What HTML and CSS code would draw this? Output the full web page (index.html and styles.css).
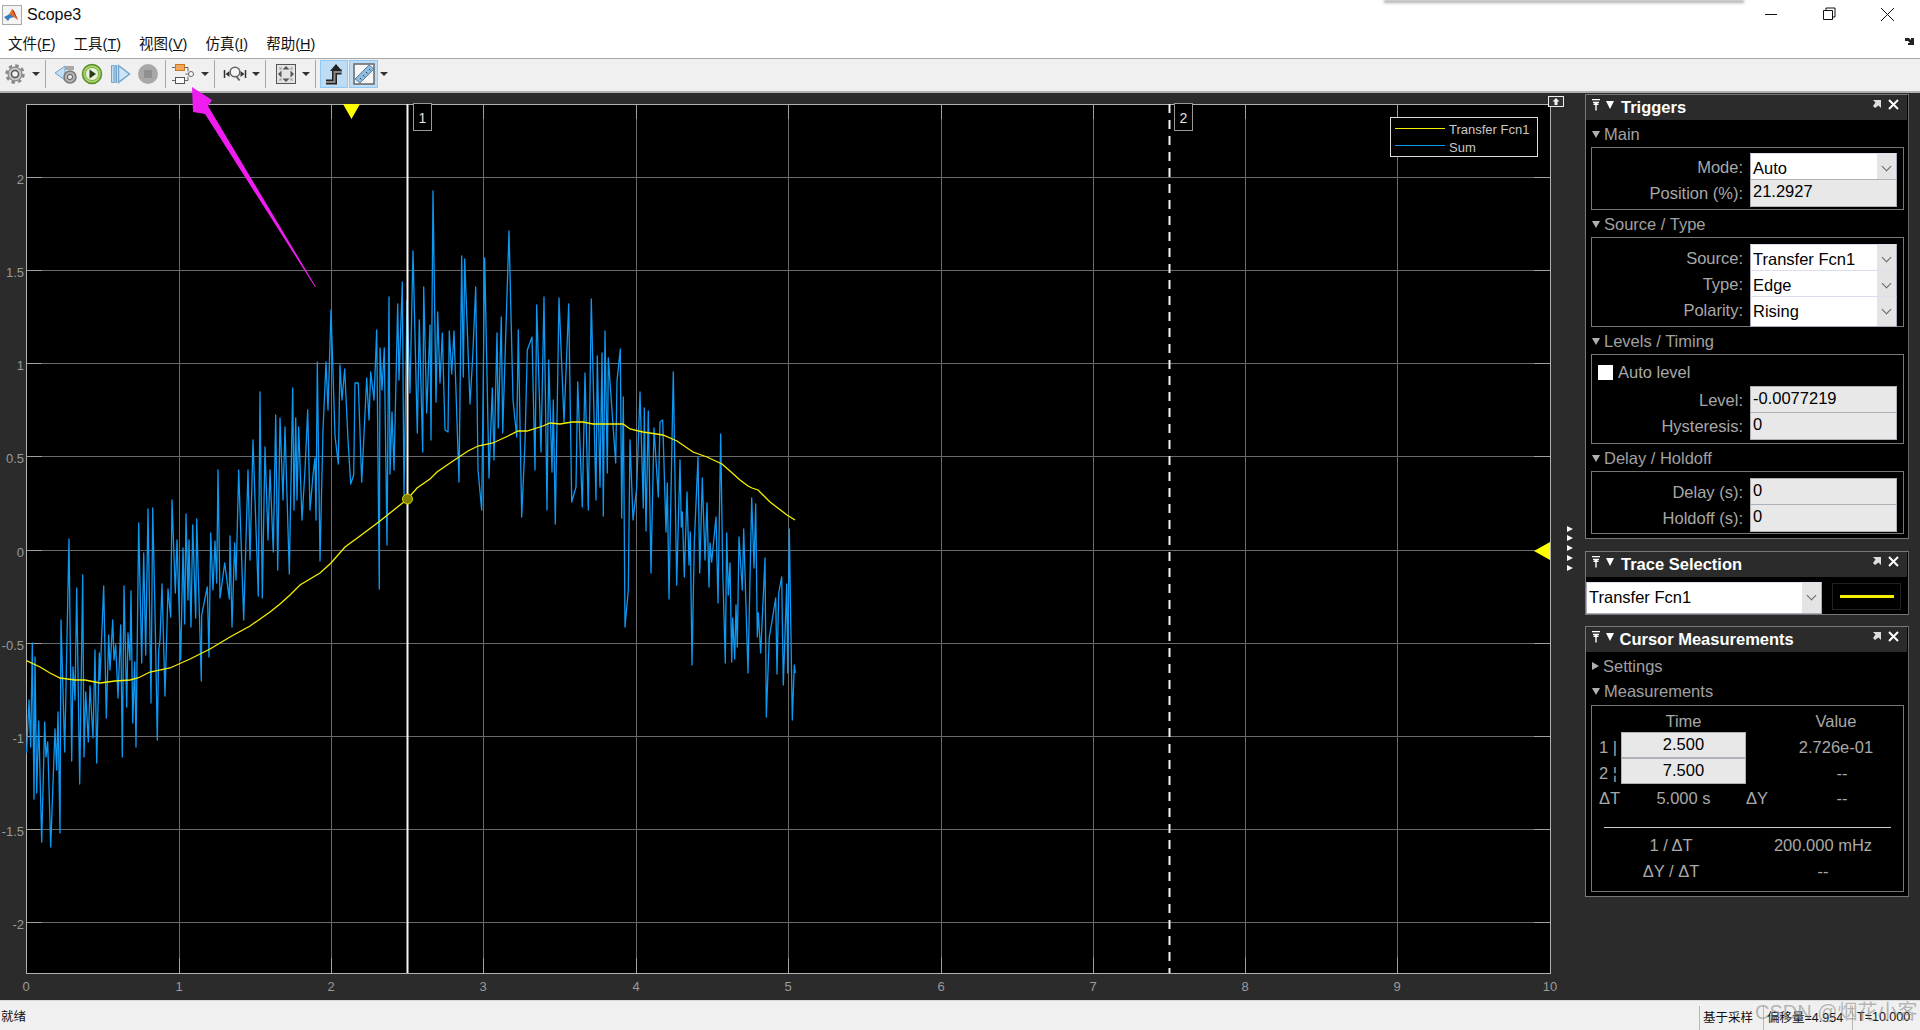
FILE: index.html
```html
<!DOCTYPE html>
<html lang="zh">
<head>
<meta charset="utf-8">
<title>Scope3</title>
<link rel="stylesheet" href="styles.css">
</head>
<body>
<header class="titlebar">
  <div class="title-row">
    <svg class="app-icon" width="20" height="20" viewBox="0 0 20 20"><rect x="0.5" y="0.5" width="19" height="19" fill="#f4f4f4" stroke="#a8a8a8"/><path d="M2 12l4-2 3-3 2 4 2 1-5 1-2 3z" fill="#3a7cc0"/><path d="M7 10l3-6 2 2 4 9-3-2-3-3z" fill="#e2702a"/><path d="M10 4l2 2 4 9-4-6z" fill="#b5321a"/></svg>
    <span class="app-title">Scope3</span>
    <div class="win-ctrls">
      <svg width="132" height="16" viewBox="0 0 132 16"><path d="M0 7.5h12" stroke="#111" fill="none"/><path d="M58.500 3.500h9v9h-9zM61 3.500v-2.500h9v9h-2.500" stroke="#111" fill="none"/><path d="M116 1l13 13M129 1l-13 13" stroke="#111" fill="none"/></svg>
    </div>
  </div>
  <div class="menu-row">
    <nav class="menu">
      <span>文件(<u>F</u>)</span><span>工具(<u>T</u>)</span><span>视图(<u>V</u>)</span><span>仿真(<u>I</u>)</span><span>帮助(<u>H</u>)</span>
    </nav>
    <svg class="mini-arrow" width="10" height="8" viewBox="0 0 10 8"><path d="M0 0h4l2 2V0h3v7H3V5h2L3 3H0z" fill="#222"/></svg>
  </div>
</header>

<div class="toolbar">
  <svg class="tool" width="24" height="24" viewBox="0 0 24 24"><circle cx="12" cy="12" r="8.500" fill="none" stroke="#8a8a8a" stroke-width="2.500" stroke-dasharray="3.500 3.170"/><circle cx="12" cy="12" r="7" fill="#c4c4c4" stroke="#777"/><circle cx="12" cy="12" r="3.500" fill="#f2f2f2" stroke="#555" stroke-width="1.500"/></svg>
  <i class="drop d1"></i><i class="sep"></i>
  <svg class="tool t-back" width="24" height="24" viewBox="0 0 24 24"><path d="M1 11l10-7v14z" fill="#c4def2" stroke="#6ea4cf"/><path d="M11 4h9v4h-9z" fill="#a8a8a8"/><circle cx="16" cy="15" r="6" fill="#b0b0b0" stroke="#777" stroke-width="1.500"/><circle cx="16" cy="15" r="2.500" fill="#eee" stroke="#555"/></svg>
  <svg class="tool" width="24" height="24" viewBox="0 0 24 24"><circle cx="12" cy="12" r="9.500" fill="#a6d36a" stroke="#5c8c2a" stroke-width="1.500"/><circle cx="12" cy="12" r="6.500" fill="#e9f3d9" stroke="#7fae46"/><path d="M9.500 7.500l6.500 4.500-6.500 4.500z" fill="#2a3a1c"/></svg>
  <svg class="tool" width="24" height="24" viewBox="0 0 24 24"><path d="M3.500 3.500h2.500v17h-2.500zM7 3.500h1.500v17h-1.500z" fill="#c4def2" stroke="#6ea4cf"/><path d="M10.500 3.500l11 8.500-11 8.500z" fill="#cfe5f6" stroke="#6ea4cf" stroke-width="1.500"/></svg>
  <svg class="tool" width="24" height="24" viewBox="0 0 24 24"><circle cx="12" cy="12" r="10" fill="#a8a8a8"/><rect x="8" y="8" width="8" height="8" fill="#909090"/></svg>
  <i class="sep s2"></i>
  <svg class="tool" width="24" height="24" viewBox="0 0 24 24"><rect x="3.500" y="2.500" width="9" height="6" fill="#f2a65a" stroke="#c87a20"/><rect x="3.500" y="15.500" width="9" height="6" fill="#fafafa" stroke="#555"/><circle cx="19" cy="12" r="2.500" fill="#fafafa" stroke="#666"/><path d="M12.500 5.500h3.500v4M16.500 12h-3M12.500 18.500h3.500v-4M3 5.500H0M3 18.500H0" fill="none" stroke="#666"/></svg>
  <i class="drop"></i><i class="sep"></i>
  <svg class="tool" width="24" height="24" viewBox="0 0 24 24"><path d="M1.500 8v8M22.500 8v8" stroke="#333" stroke-width="1.500"/><path d="M2.500 12l4-3v6zM21.500 12l-4-3v6z" fill="#333"/><circle cx="12" cy="10" r="4.800" fill="#f4f4f4" stroke="#666" stroke-width="1.500"/><path d="M13.500 14.500l3 4" stroke="#666" stroke-width="2"/></svg>
  <i class="drop"></i><i class="sep"></i>
  <svg class="tool t-fit" width="24" height="24" viewBox="0 0 24 24"><rect x="2.500" y="2.500" width="19" height="19" fill="#e4e4e4" stroke="#555"/><path d="M12 4l3.500 3.500h-7zM12 20l3.500-3.500h-7zM4 12l3.500-3.500v7zM20 12l-3.500-3.500v7z" fill="#555"/><path d="M5 5l3.500 1-2.500 2.500zM19 5l-3.500 1 2.500 2.500zM5 19l3.500-1-2.500-2.500zM19 19l-3.500-1 2.500-2.500z" fill="#aaa"/></svg>
  <i class="drop"></i><i class="sep s3"></i>
  <span class="toggle"><svg width="22" height="24" viewBox="0 0 22 24"><path d="M3 20h8.500v-10h7" fill="none" stroke="#222" stroke-width="5"/><path d="M3 20h8.500v-10h7" fill="none" stroke="#888" stroke-width="2"/><path d="M7 9l6-7 6 7z" fill="#222"/></svg></span>
  <span class="toggle wide"><svg width="22" height="24" viewBox="0 0 22 24"><rect x="1" y="2" width="20" height="20" fill="#f6f6f6" stroke="#666" stroke-width="1.500"/><path d="M2 17L16 3l5 4L7 21z" fill="#8cbce0" stroke="#5a7f9c"/><path d="M7 16l1.500 1.500M10 13l1.500 1.500M13 10l1.500 1.500M16 7l1.500 1.500" stroke="#345"/></svg></span>
  <i class="drop d2"></i>
</div>

<main class="workspace">
  <svg class="scope" width="1585" height="907" viewBox="0 93 1585 907">
    <rect x="26" y="104" width="1525" height="870" fill="#000"/>
    <path class="grid" d="M179.500 104V973M331.500 104V973M483.500 104V973M636.500 104V973M788.500 104V973M941.500 104V973M1093.500 104V973M1245.500 104V973M1397.500 104V973M26 177.500H1550M26 270.500H1550M26 363.500H1550M26 456.500H1550M26 550.500H1550M26 643.500H1550M26 736.500H1550M26 829.500H1550M26 922.500H1550"/>
    <path class="ticks" d="M179.500 104v15M331.500 104v15M483.500 104v15M636.500 104v15M788.500 104v15M941.500 104v15M1093.500 104v15M1245.500 104v15M1397.500 104v15M179.500 973v-15M331.500 973v-15M483.500 973v-15M636.500 973v-15M788.500 973v-15M941.500 973v-15M1093.500 973v-15M1245.500 973v-15M1397.500 973v-15M26 177.500h16M26 270.500h16M26 363.500h16M26 456.500h16M26 550.500h16M26 643.500h16M26 736.500h16M26 829.500h16M26 922.500h16M1550 177.500h-16M1550 270.500h-16M1550 363.500h-16M1550 456.500h-16M1550 643.500h-16M1550 736.500h-16M1550 829.500h-16M1550 922.500h-16"/>
    <rect class="frame" x="26.500" y="104.500" width="1524" height="869"/>

    <polyline class="sum" points="26.500,753 29,700 30.700,747 32.300,643 34,799 35,657 36.700,793 38.700,721 41.700,842 44.700,722 46,757 47.700,742 50.700,847 55,729 56.700,770 58,712 60,833 61,620 64.700,752 69,539 71.700,761 73,667 75,700 76.700,588 79.700,784 82.700,575 84,757 85.700,692 88.300,742 90,686 93,738 95,650 96.700,763 99.300,653 100,680 103.700,586 106.300,718 108.700,635 110,670 112.700,620 114,660 115.700,645 118,698 120.700,625 122.300,757 124,586 126.700,707 128,633 130,660 131,591 132.700,723 134.700,662 136,747 138.700,523 141.700,663 143.700,553 145.700,655 148,509 151,703 152.700,508 155,612 157.300,740 158.700,650 160,640 162,584 165,696 168,589 170.700,617 172,500 175.300,593 177,540 180.700,660 183,548 184.700,624 186,514 188,600 189,540 191,627 192.700,525 195.700,618 196.700,519 201.300,681 201.700,615 207.300,587 209,657 210.700,533 213,590 215,541 216.700,583 218,470 220,598 224.700,563 229.300,599 230,536 232,627 234.700,543 236,580 238.700,470 243.700,620 248,470 250,560 253,440 258.300,596 260,392 262.300,598 265,447 268,540 270,470 273.300,552 275.700,415 277.700,570 280,418 283,500 285,427 289.300,574 292.700,388 294,510 295.700,418 297,500 298.700,427 302,520 305,470 307.700,410 310,510 313,475 315,458 316,520 317.300,362 320,561 323,430 326,362 328,410 331,310 335,436 338.300,464 340,365 342,400 344.700,369 348,440 350.700,484 353.700,475 355,383 358.300,383 361.700,482 366.700,378 369,420 370.700,372 374,400 376.700,330 379.300,589 380,348 382,390 384.300,348 387,545 389,297 390,474 392,412 394,470 397.700,304 399,380 402.300,282 404,495 407,300 410,393 413,251 417.300,433 419.300,320 422.700,452 423.700,287 426.700,413 430,325 431,440 433,191 436,402 437.700,312 440,383 442.300,333 445,430 448,432 449.300,331 451.700,374 454,331 459,482 461.700,256 463.300,377 464.700,259 470,404 472.700,357 475.700,287 478,470 481.700,510 484.700,258 489,478 492.300,388 494,460 497,333 498.300,428 501.300,317 502.700,433 509,231 513,400 516.700,437 518.300,330 521.700,517 525,443 527.300,350 532,337 535,470 536.700,305 541,452 544,297 547,510 548.700,360 552,472 553.300,400 555.300,524 559,298 564,422 568.700,304 571.700,502 576,487 577.700,382 582.300,507 585,373 588.300,510 591.300,299 596,500 597.300,356 600,487 602,353 603.300,516 605,331 607.300,473 608.300,358 615.700,463 617,381 620.300,349 621.700,518 623.300,397 625,627 628.300,590 630,440 633,520 636.700,488 640,392 643.300,508 644.300,408 646,531 648.300,411 651,573 654,428 658.300,497 660,422 662.700,420 666,532 667.300,483 669,599 673.300,372 676.700,585 680,460 681.300,527 682.300,512 684.300,577 687,492 689,565 690.300,532 692,665 694.300,543 698,457 699.700,573 702.300,478 705,560 707,503 709,587 710,543 711.700,562 716,517 718,603 720.700,434 722.700,570 725.300,663 726.700,533 728.300,595 730,563 731.700,662 732.700,618 734.700,659 736,605 737.300,647 739,537 742.300,590 743.700,529 746,607 748,673 751.700,498 754,568 755.700,504 757.300,637 758.300,613 760.700,653 765,558 766.300,717 769.300,637 771.700,623 773.300,613 775.700,598 777,674 778.700,593 781.700,577 783.300,685 786.700,584 787.700,673 789.300,529 792.300,720 794.300,665 795.300,673"/>
    <polyline class="tf" points="26.500,660.700 40,667 50,673 60,678 75,680 85,680 100,683 115,681 130,680 138,678 150,672 170,668 190,659 210,649 230,637 250,626 270,612 280,604 290,595 300,585 320,573 331,563 345,547 360,536 380,521 395,509 407.500,499 417,488 430,479 437,472 450,463 468,451 478,446 493,443 508,436 518,431 527,431 543,426 550,423 560,424 572,422 583,422 593,424 623,424 630,429 643,432 663,435 677,441 693,452 707,457 722,464 730,471 740,480 748,486 752,488 758,490 770,502 787,515 795,520"/>

    <path class="cursor1" d="M407.500 104V973"/>
    <path class="cursor2" d="M1169.500 104V973"/>
    <circle class="marker" cx="407.500" cy="499" r="5"/>
    <rect class="cur-box" x="413.500" y="103.500" width="18" height="27"/>
    <text class="cur-text" x="422.500" y="123">1</text>
    <rect class="cur-box" x="1174.500" y="103.500" width="18" height="27"/>
    <text class="cur-text" x="1183.500" y="123">2</text>

    <path class="yl" d="M343 104h17l-8.500 15zM1550 542v18l-16-9z"/>
    <path class="wh" d="M1567 526l6 3-6 3zM1567 535l6 3-6 3zM1567 545l6 3-6 3zM1567 555l6 3-6 3zM1567 565l6 3-6 3z"/>
    <rect class="undock" x="1548.500" y="96.500" width="15" height="10"/>
    <path class="wh" d="M1556 98l3.500 3.500h-2v3.500h-3v-3.500h-2z"/>

    <rect class="legend" x="1390.500" y="117.500" width="147" height="39"/>
    <path class="lg-y" d="M1395 128.500h50"/>
    <path class="lg-b" d="M1395 145.500h50"/>
    <text class="lg-text" x="1449" y="134">Transfer Fcn1</text>
    <text class="lg-text" x="1449" y="152">Sum</text>

    <g class="ylab">
      <text x="24" y="184">2</text><text x="24" y="277">1.5</text><text x="24" y="370">1</text><text x="24" y="463">0.5</text><text x="24" y="557">0</text><text x="24" y="650">-0.5</text><text x="24" y="743">-1</text><text x="24" y="836">-1.5</text><text x="24" y="929">-2</text>
    </g>
    <g class="xlab">
      <text x="26" y="991">0</text><text x="179" y="991">1</text><text x="331" y="991">2</text><text x="483" y="991">3</text><text x="636" y="991">4</text><text x="788" y="991">5</text><text x="941" y="991">6</text><text x="1093" y="991">7</text><text x="1245" y="991">8</text><text x="1397" y="991">9</text><text x="1550" y="991">10</text>
    </g>
  </svg>

  <aside class="side">
    <section class="panel p-trig">
      <div class="p-head">
        <svg class="pin" width="8" height="12" viewBox="0 0 8 12"><path d="M0 .5h8M1 3.500h6M4 3.500v8" stroke="#fff" stroke-width="1.400" fill="none"/><path d="M1 6l3-3 3 3z" fill="#fff"/></svg>
        <i class="tri-d big"></i><h2>Triggers</h2>
        <svg class="undock-s" width="8" height="8" viewBox="0 0 8 8"><path d="M0 0h8v8L5.500 5.500 2 8 0 6l2.500-3.500z" fill="#ddd"/></svg>
        <svg class="close-s" width="11" height="11" viewBox="0 0 11 11"><path d="M1 1l9 9M10 1l-9 9" stroke="#fff" stroke-width="2"/></svg>
      </div>
      <div class="sec-l"><i class="tri-d"></i>Main</div>
      <div class="box b-main">
        <div class="row"><label>Mode:</label><div class="dd">Auto<b></b></div></div>
        <div class="row"><label>Position (%):</label><div class="ed">21.2927</div></div>
      </div>
      <div class="sec-l"><i class="tri-d"></i>Source / Type</div>
      <div class="box b-src">
        <div class="row"><label>Source:</label><div class="dd">Transfer Fcn1<b></b></div></div>
        <div class="row"><label>Type:</label><div class="dd">Edge<b></b></div></div>
        <div class="row tall"><label>Polarity:</label><div class="dd">Rising<b></b></div></div>
      </div>
      <div class="sec-l"><i class="tri-d"></i>Levels / Timing</div>
      <div class="box b-lev">
        <div class="check"><i></i>Auto level</div>
        <div class="row"><label>Level:</label><div class="ed">-0.0077219</div></div>
        <div class="row"><label>Hysteresis:</label><div class="ed">0</div></div>
      </div>
      <div class="sec-l"><i class="tri-d"></i>Delay / Holdoff</div>
      <div class="box b-del">
        <div class="row"><label>Delay (s):</label><div class="ed">0</div></div>
        <div class="row"><label>Holdoff (s):</label><div class="ed">0</div></div>
      </div>
    </section>

    <section class="panel p-trace">
      <div class="p-head">
        <svg class="pin" width="8" height="12" viewBox="0 0 8 12"><path d="M0 .5h8M1 3.500h6M4 3.500v8" stroke="#fff" stroke-width="1.400" fill="none"/><path d="M1 6l3-3 3 3z" fill="#fff"/></svg>
        <i class="tri-d big"></i><h2>Trace Selection</h2>
        <svg class="undock-s" width="8" height="8" viewBox="0 0 8 8"><path d="M0 0h8v8L5.500 5.500 2 8 0 6l2.500-3.500z" fill="#ddd"/></svg>
        <svg class="close-s" width="11" height="11" viewBox="0 0 11 11"><path d="M1 1l9 9M10 1l-9 9" stroke="#fff" stroke-width="2"/></svg>
      </div>
      <div class="trace-row">
        <div class="dd trace-dd">Transfer Fcn1<b></b></div>
        <div class="swatch"><i></i></div>
      </div>
    </section>

    <section class="panel p-cur">
      <div class="p-head">
        <svg class="pin" width="8" height="12" viewBox="0 0 8 12"><path d="M0 .5h8M1 3.500h6M4 3.500v8" stroke="#fff" stroke-width="1.400" fill="none"/><path d="M1 6l3-3 3 3z" fill="#fff"/></svg>
        <i class="tri-d big"></i><h2 class="h-cur">Cursor Measurements</h2>
        <svg class="undock-s" width="8" height="8" viewBox="0 0 8 8"><path d="M0 0h8v8L5.500 5.500 2 8 0 6l2.500-3.500z" fill="#ddd"/></svg>
        <svg class="close-s" width="11" height="11" viewBox="0 0 11 11"><path d="M1 1l9 9M10 1l-9 9" stroke="#fff" stroke-width="2"/></svg>
      </div>
      <div class="sec-l s-set"><i class="tri-r"></i>Settings</div>
      <div class="sec-l s-mea"><i class="tri-d"></i>Measurements</div>
      <div class="box b-mea">
        <div class="mea-grid">
          <span></span><span class="c">Time</span><span></span><span class="c shift">Value</span>
          <span>1 |</span><div class="ed c-ed">2.500</div><span></span><span class="c shift">2.726e-01</span>
          <span>2 ¦</span><div class="ed c-ed">7.500</div><span></span><span class="c">--</span>
          <span>ΔT</span><span class="c">5.000 s</span><span>ΔY</span><span class="c">--</span>
        </div>
        <hr class="rule">
        <div class="mea-low">
          <span>1 / ΔT</span><span>200.000 mHz</span>
          <span>ΔY / ΔT</span><span>--</span>
        </div>
      </div>
    </section>
  </aside>
</main>

<footer class="status">
  <span class="ready">就绪</span>
  <div class="cells">
    <span class="cell c1">基于采样</span><span class="cell c2">偏移量=4.954</span><span class="cell c3">T=10.000</span>
  </div>
</footer>

<div class="top-shadow"></div>
<div class="watermark">CSDN @烟花小客</div>
<svg class="pointer" width="340" height="300" viewBox="0 0 340 300"><polygon points="192,87 212,100 208,106 316,287 315,287 205,114 193,112" fill="#f01df0"/></svg>
</body>
</html>
```

FILE: styles.css
```css
* { box-sizing: border-box; }
html, body { margin: 0; height: 100%; }
body {
  width: 1920px; height: 1030px; overflow: hidden; position: relative;
  display: flex; flex-direction: column;
  background: #2b2b2b;
  font-family: "Liberation Sans", "Noto Sans CJK SC", sans-serif;
}

/* title + menu */
.titlebar { height: 58px; background: #fff; flex: none; }
.title-row { height: 30px; display: flex; align-items: center; padding-left: 2px; }
.app-icon { margin-right: 5px; }
.app-title { font-size: 16px; color: #111; }
.win-ctrls { margin-left: auto; margin-right: 23px; display: flex; }
.menu-row { height: 28px; display: flex; align-items: center; padding: 0 5px 4px 8px; justify-content: space-between; }
.menu { display: flex; gap: 18px; font-size: 14.500px; color: #111; }

/* toolbar */
.toolbar {
  height: 35px; flex: none; display: flex; align-items: center;
  background: #f0f0f0; border-top: 1px solid #a8a8a8; border-bottom: 2px solid #b0b0b0;
  padding: 0 0 2px 3px;
}
.tool { margin-right: 4px; flex: none; }
.t-back { margin-right: 2px; }
.t-fit { margin-right: 3px; }
.drop { width: 0; height: 0; border: 4px solid transparent; border-top: 4px solid #333; border-bottom: 0; margin: 0 5px 0 1px; flex: none; }
.drop.d2 { margin-left: 2px; }
.sep { width: 1px; height: 28px; background: #a8a8a8; margin-right: 8px; flex: none; }
.sep.s2 { margin-left: 1px; margin-right: 6px; }
.sep.s3 { margin-right: 4px; }
.toggle {
  width: 28px; height: 28px; display: flex; align-items: center; justify-content: center;
  background: #bfdcf5; border: 1px solid #90c8f6; flex: none; margin-right: 1px;
}
.toggle.wide { width: 29px; margin-right: 0; }

/* plot */
.workspace { flex: 1; display: flex; min-height: 0; }
.scope { flex: none; display: block; }
.grid { stroke: #6a6a6a; stroke-width: 1; fill: none; shape-rendering: crispEdges; }
.ticks { stroke: #a0a0a0; stroke-width: 1; fill: none; shape-rendering: crispEdges; }
.frame { fill: none; stroke: #b0b0b0; shape-rendering: crispEdges; }
.sum { fill: none; stroke: #0f98f2; stroke-width: 1.300; stroke-linejoin: round; }
.tf { fill: none; stroke: #f5f000; stroke-width: 1.300; }
.cursor1 { stroke: #f4f4f4; stroke-width: 2; }
.cursor2 { stroke: #f4f4f4; stroke-width: 2; stroke-dasharray: 9 7; }
.marker { fill: #808000; stroke: #d8d800; stroke-width: 1; }
.cur-box { fill: #000; stroke: #999; stroke-width: 1; shape-rendering: crispEdges; }
.cur-text { fill: #e4e4e4; font-size: 14px; text-anchor: middle; }
.yl { fill: #ffff00; }
.wh { fill: #f4f4f4; }
.undock { fill: #333; stroke: #eee; shape-rendering: crispEdges; }
.legend { fill: #000; stroke: #ddd; shape-rendering: crispEdges; }
.lg-y { stroke: #f5f000; fill: none; }
.lg-b { stroke: #0f98f2; fill: none; }
.lg-text { fill: #c8c8c8; font-size: 13px; }
.ylab text, .xlab text { fill: #9a9a9a; font-size: 13px; }
.ylab text { text-anchor: end; }
.xlab text { text-anchor: middle; }

/* side column */
.side { width: 324px; flex: none; padding-top: 1px; display: flex; flex-direction: column; font-size: 16.500px; }
.panel { background: #000; border: 1px solid #777; border-right-color: #666; color: #a8a8a8; flex: none; }
.p-trig { height: 445px; margin-bottom: 12px; }
.p-trace { height: 64px; margin-bottom: 11px; }
.p-cur { height: 271px; }
.p-head {
  height: 25px; background: #2b2b2b; display: flex; align-items: center; position: relative;
  margin-right: 1px; padding-left: 6px;
}
.p-head h2 { margin: 0 0 0 7px; font-size: 16.500px; font-weight: bold; color: #fff; }
.p-head .h-cur { margin-left: 5.500px; }
.pin { margin-top: -5px; flex: none; }
.tri-d { display: inline-block; width: 0; height: 0; border: 4.500px solid transparent; border-top: 7px solid #b0b0b0; border-bottom: 0; vertical-align: 2px; }
.tri-d.big { border-left-width: 4px; border-right-width: 4px; border-top: 8px solid #fff; margin: -5px 0 0 6px; flex: none; }
.tri-r { display: inline-block; width: 0; height: 0; border: 4.500px solid transparent; border-left: 7px solid #b0b0b0; border-right: 0; vertical-align: 1px; }
.undock-s { position: absolute; right: 26px; top: 5px; }
.close-s { position: absolute; right: 8px; top: 4px; }
.sec-l { height: 27px; display: flex; align-items: center; padding: 2px 0 0 6px; color: #a0a0a0; }
.sec-l .tri-d, .sec-l .tri-r { margin-right: 4px; }

.box { margin-left: 5px; margin-right: 4px; border: 1px solid #777; }
.b-main { height: 63px; padding-top: 5px; }
.b-src { height: 90px; padding-top: 6px; }
.b-lev { height: 90px; }
.b-del { height: 63px; padding-top: 6px; }
.row { display: grid; grid-template-columns: 151px 147px; column-gap: 7px; height: 26px; }
.row.tall { height: 30px; }
.row label { text-align: right; line-height: 28px; color: #a8a8a8; }
.dd, .ed { color: #000; padding-left: 2px; height: 100%; position: relative; }
.dd { background: #fff; border: 1px solid #aab; border-top-color: #dde; line-height: 29px; }
.dd b { position: absolute; right: 0; top: 0; bottom: 0; width: 19px; background: #e4e4e4; }
.dd b::after { content: ""; position: absolute; left: 6px; top: 9px; width: 6px; height: 6px; border-right: 1px solid #666; border-bottom: 1px solid #666; transform: rotate(45deg); }
.ed { background: #e8e8e8; border: 1px solid #b0b0b8; line-height: 22px; }

.check { height: 31px; display: flex; align-items: center; padding: 4px 0 0 6px; }
.check i { width: 15px; height: 15px; background: #fff; margin-right: 5px; }

.trace-row { display: flex; align-items: flex-start; padding-top: 5px; }
.trace-dd { width: 236px; height: 32px; line-height: 29px; padding-left: 2px; flex: none; }
.swatch { width: 69px; height: 27px; border: 1px solid #222; margin: 1px 0 0 10px; display: flex; align-items: center; justify-content: center; }
.swatch i { width: 54px; height: 3px; background: #f5f000; }

.s-set { height: 26px; margin-top: 1px; padding-top: 0; }
.s-mea { height: 25px; padding-top: 0; margin-bottom: 1px; }
.b-mea { height: 187px; }
.mea-grid { display: grid; grid-template-columns: 22px 125px 40px 112px; grid-auto-rows: 26px; padding-left: 7px; align-items: center; color: #a8a8a8; }
.mea-grid > span { padding-top: 4px; }
.mea-grid > :nth-last-child(-n+4) { height: 30px; line-height: 33px; padding-top: 0; }
.c { text-align: center; }
.shift { padding-right: 12px; }
.c-ed { height: 26px; text-align: center; padding: 0; }
.rule { margin: 17px 12px 5px; border: 0; height: 1px; background: #ccc; }
.mea-low { display: grid; grid-template-columns: 158px 146px; grid-auto-rows: 26px; line-height: 24px; text-align: center; }

/* status */
.status {
  height: 30px; flex: none; background: #f0f0f0; border-top: 1px solid #d8d8d8;
  display: flex; align-items: center; justify-content: space-between; font-size: 12.500px; color: #111;
}
.ready { padding-left: 1px; }
.cells { display: flex; height: 100%; align-items: stretch; padding-right: 2px; padding-top: 5px; }
.cell { border-left: 1px solid #b8b8b8; padding: 0 0 3px 3px; display: flex; align-items: center; }
.c1 { width: 64px; }
.c2 { width: 89px; }
.c3 { width: 66px; padding-left: 4px; }

/* overlays */
.top-shadow { position: absolute; left: 1385px; top: 0; width: 358px; height: 1px; background: #ccc; box-shadow: 0 1px 3px 1px #aaa; }
.watermark { position: absolute; left: 1755px; top: 1002px; font-size: 20px; line-height: 20px; color: rgba(130,130,130,.55); white-space: nowrap; }
.pointer { position: absolute; left: 0; top: 0; pointer-events: none; }
```
